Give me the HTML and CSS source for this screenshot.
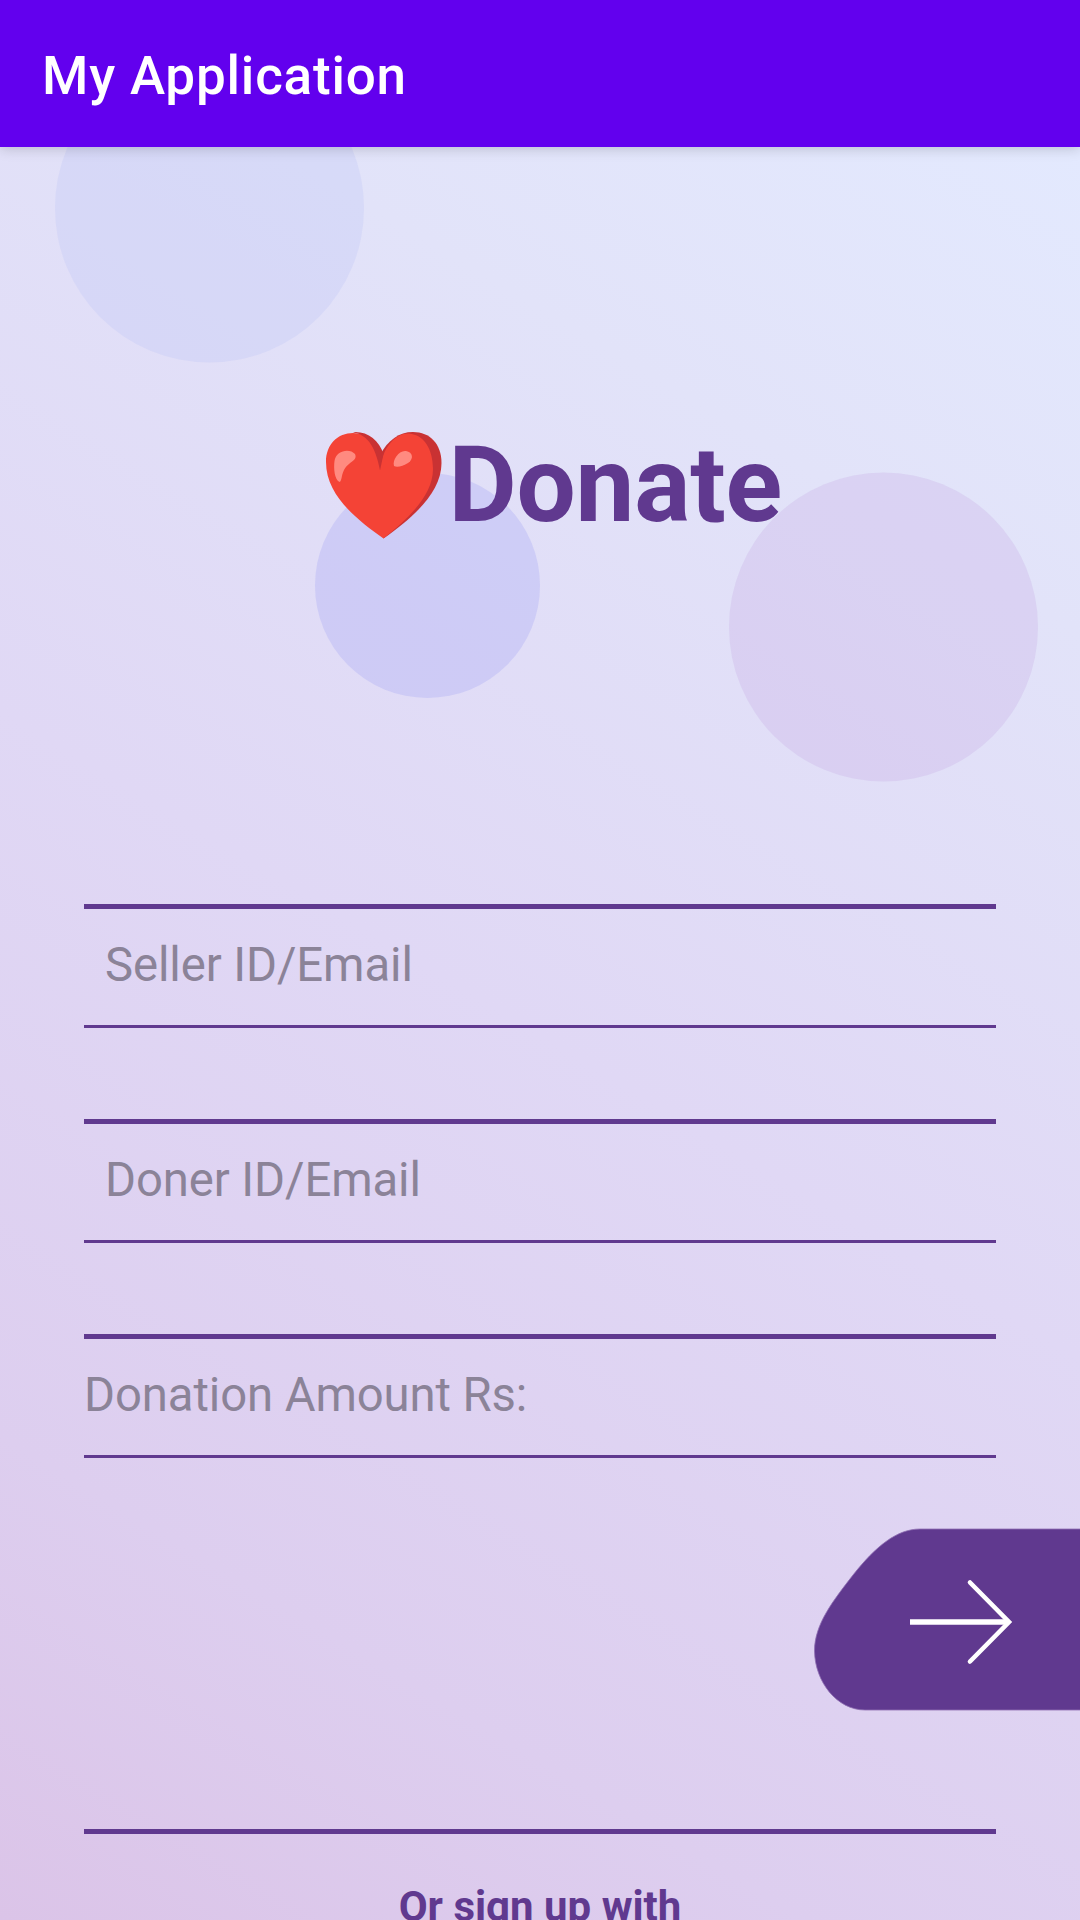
FILE: index.html
```html
<!DOCTYPE html>
<html lang="en">
<head>
<meta charset="utf-8">
<title>My Application</title>
<link rel="stylesheet" href="styles.css">
</head>
<body>
<div class="screen">
  <header class="app-bar"><h1 class="app-title">My Application</h1></header>
  <main class="content">
    <svg class="bubbles" viewBox="0 147 1080 700" aria-hidden="true">
      <circle cx="209.5" cy="208" r="154.5" fill="#c3c8f5" fill-opacity=".35"/>
      <circle cx="427.5" cy="585.5" r="112.5" fill="#b2b2f4" fill-opacity=".4"/>
      <circle cx="883.5" cy="627" r="154.5" fill="#c6abe6" fill-opacity=".3"/>
    </svg>
    <h2 class="heading">
      <svg class="heart" viewBox="26 22 116 107" aria-hidden="true">
        <path fill="#c93233" d="M80 45C88 30 99 22 113 22C130 22 141.500 34 141.500 53C141.500 82 114 107 83.500 128.500Z"/>
        <path fill="#f44336" d="M79.500 60C83 36 96 23 109 23.500C124 25 133 39 133 59C133 85 109 108 83.500 128.500C56 109 26 85 26 52C26 34 38 23 53 23C67 23 76 34 81 50Z"/>
        <path fill="#c93233" d="M53 22.200C67 21 79 30 83.500 44L80 60.500C76 39 69 25 53 22.200Z"/>
        <path fill="#ff8a80" d="M39.500 72C34.500 70 33.500 58 34.500 51C36 40 50 38 55 44C58 51 49 51 44 60C41 66 42 71 39.500 72Z"/>
        <path fill="#ff8a80" d="M94 56C92 50 99 40 106 41C113 42 114 49 108 53C103 56 97 58 94 56Z"/>
      </svg>
      <span>Donate</span>
    </h2>
    <form class="form">
      <div class="field indented">Seller ID/Email</div>
      <div class="field indented">Doner ID/Email</div>
      <div class="field">Donation Amount Rs:</div>
    </form>
    <button class="submit" type="button" aria-label="Continue">
      <svg viewBox="24 28 266 183">
        <path d="M290 29H130C107 29 86 46 63 75C43 101 24.500 124 24.500 151C25 182 47 210 75 210H290" fill="#60398f" stroke="#8f70b3" stroke-width=".8"/>
        <path d="M120 122H219" fill="none" stroke="#fff" stroke-width="5.600"/>
        <path d="M180 82.500L219 122L180 161.500" fill="none" stroke="#fff" stroke-width="4.600" stroke-linecap="round"/>
      </svg>
    </button>
    <footer class="alternative">Or sign up with</footer>
  </main>
</div>
</body>
</html>
```
FILE: styles.css
```css
* { box-sizing: border-box; }

body {
  margin: 0;
  font-family: Roboto, "Noto Sans", sans-serif;
}

.screen {
  height: 1920px;
  display: flex;
  flex-direction: column;
  overflow: hidden;
}

.app-bar {
  position: relative;
  z-index: 1;
  flex: none;
  height: 147px;
  padding: 5px 42px 0;
  display: flex;
  align-items: center;
  background: #6200ee;
  box-shadow: 0 2px 12px rgba(0, 0, 0, .17);
}

.app-title {
  margin: 0;
  color: #fff;
  font-size: 53px;
  font-weight: 500;
  letter-spacing: .8px;
}

.content {
  position: relative;
  flex: 1;
  min-height: 0;
  display: flex;
  flex-direction: column;
  background: linear-gradient(31deg, #dbc4e8 0%, #ddceef 20%, #e0d8f5 50%, #e2e3f9 80%, #e3e9fe 100%);
}

.bubbles {
  position: absolute;
  top: 0;
  left: 0;
  width: 1080px;
  height: 700px;
}

.heading {
  position: relative;
  height: 123px;
  margin: 277px 0 0 326px;
  display: flex;
  align-items: flex-start;
  gap: 6.5px;
  color: #60398f;
  font-size: 105px;
  font-weight: 700;
  line-height: 123px;
  letter-spacing: -.2px;
}

.heart {
  width: 116px;
  height: 107px;
  margin-top: 8px;
}

.form {
  margin: 357px 84px 0;
  display: flex;
  flex-direction: column;
  gap: 91px;
}

.field {
  height: 124px;
  padding-bottom: 4px;
  border-top: 5px solid #60398f;
  border-bottom: 3px solid #60398f;
  color: #8b8398;
  font-size: 47.25px;
  line-height: 112px;
  letter-spacing: -.09px;
}

.indented { padding-left: 21px; }

.submit {
  align-self: flex-end;
  width: 266px;
  height: 183px;
  margin-top: 70px;
  padding: 0;
  border: 0;
  background: none;
}

.submit svg { display: block; width: 266px; height: 183px; }

.alternative {
  margin: 118px 84px 0;
  padding-top: 48px;
  border-top: 5px solid #60398f;
  color: #60398f;
  font-size: 42px;
  font-weight: 700;
  line-height: 50px;
  text-align: center;
}
```
